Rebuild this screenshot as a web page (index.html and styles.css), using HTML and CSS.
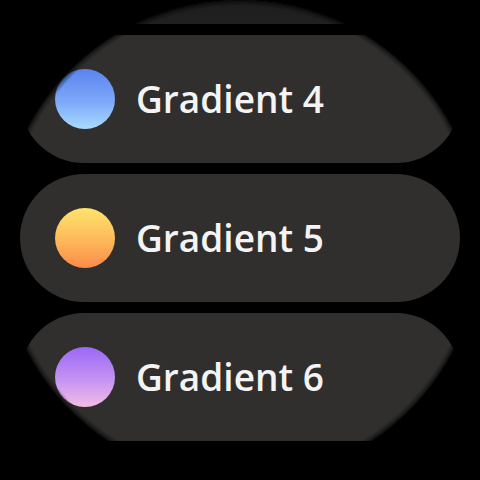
FILE: index.html
```html
<!DOCTYPE html>
<html>
<head>
<meta charset="utf-8">
<link rel="stylesheet" href="styles.css">
</head>
<body>
<div class="screen">
  <div class="list">
    <div class="chip faded"></div>
    <div class="chip"><span class="dot g4"></span><span class="label">Gradient 4</span></div>
    <div class="chip"><span class="dot g5"></span><span class="label">Gradient 5</span></div>
    <div class="chip"><span class="dot g6"></span><span class="label">Gradient 6</span></div>
  </div>
  <div class="vignette"></div>
</div>
</body>
</html>
```
FILE: styles.css
```css
html, body {
  margin: 0;
  padding: 0;
  background: #000;
}
.screen {
  width: 480px;
  height: 480px;
  border-radius: 50%;
  overflow: hidden;
  position: relative;
  background: #000;
}
.list {
  display: flex;
  flex-direction: column;
  gap: 11px;
  padding: 0 20px;
  margin-top: -104px;
}
.chip {
  flex: 0 0 128px;
  height: 128px;
  border-radius: 64px;
  background: #302f2e;
  display: flex;
  align-items: center;
  padding-left: 35px;
  gap: 21px;
  box-sizing: border-box;
}
.chip.faded {
  background: linear-gradient(0deg, #202020 0%, #1a1a1a 40%, #111 100%);
}
.dot {
  width: 60px;
  height: 60px;
  border-radius: 50%;
  flex: 0 0 60px;
}
.g4 { background: linear-gradient(180deg, #5a84ee 0%, #7ea8f8 55%, #a9dbff 100%); }
.g5 { background: linear-gradient(180deg, #fde46c 0%, #fdb85a 55%, #fb8b48 100%); }
.g6 { background: linear-gradient(180deg, #9c68f6 0%, #c493f2 55%, #f4bde6 100%); }
.label {
  font-family: "Open Sans", "Liberation Sans", sans-serif;
  font-weight: 600;
  font-size: 37px;
  color: #f4f4f4;
  line-height: 1;
  padding-bottom: 2px;
}
.vignette {
  position: absolute;
  inset: 0;
  border-radius: 50%;
  background: radial-gradient(circle at 50% 50%, rgba(0,0,0,0) 0, rgba(0,0,0,0) 234px, rgba(0,0,0,0.45) 238.5px, rgba(0,0,0,0.9) 240px);
  pointer-events: none;
}
```
